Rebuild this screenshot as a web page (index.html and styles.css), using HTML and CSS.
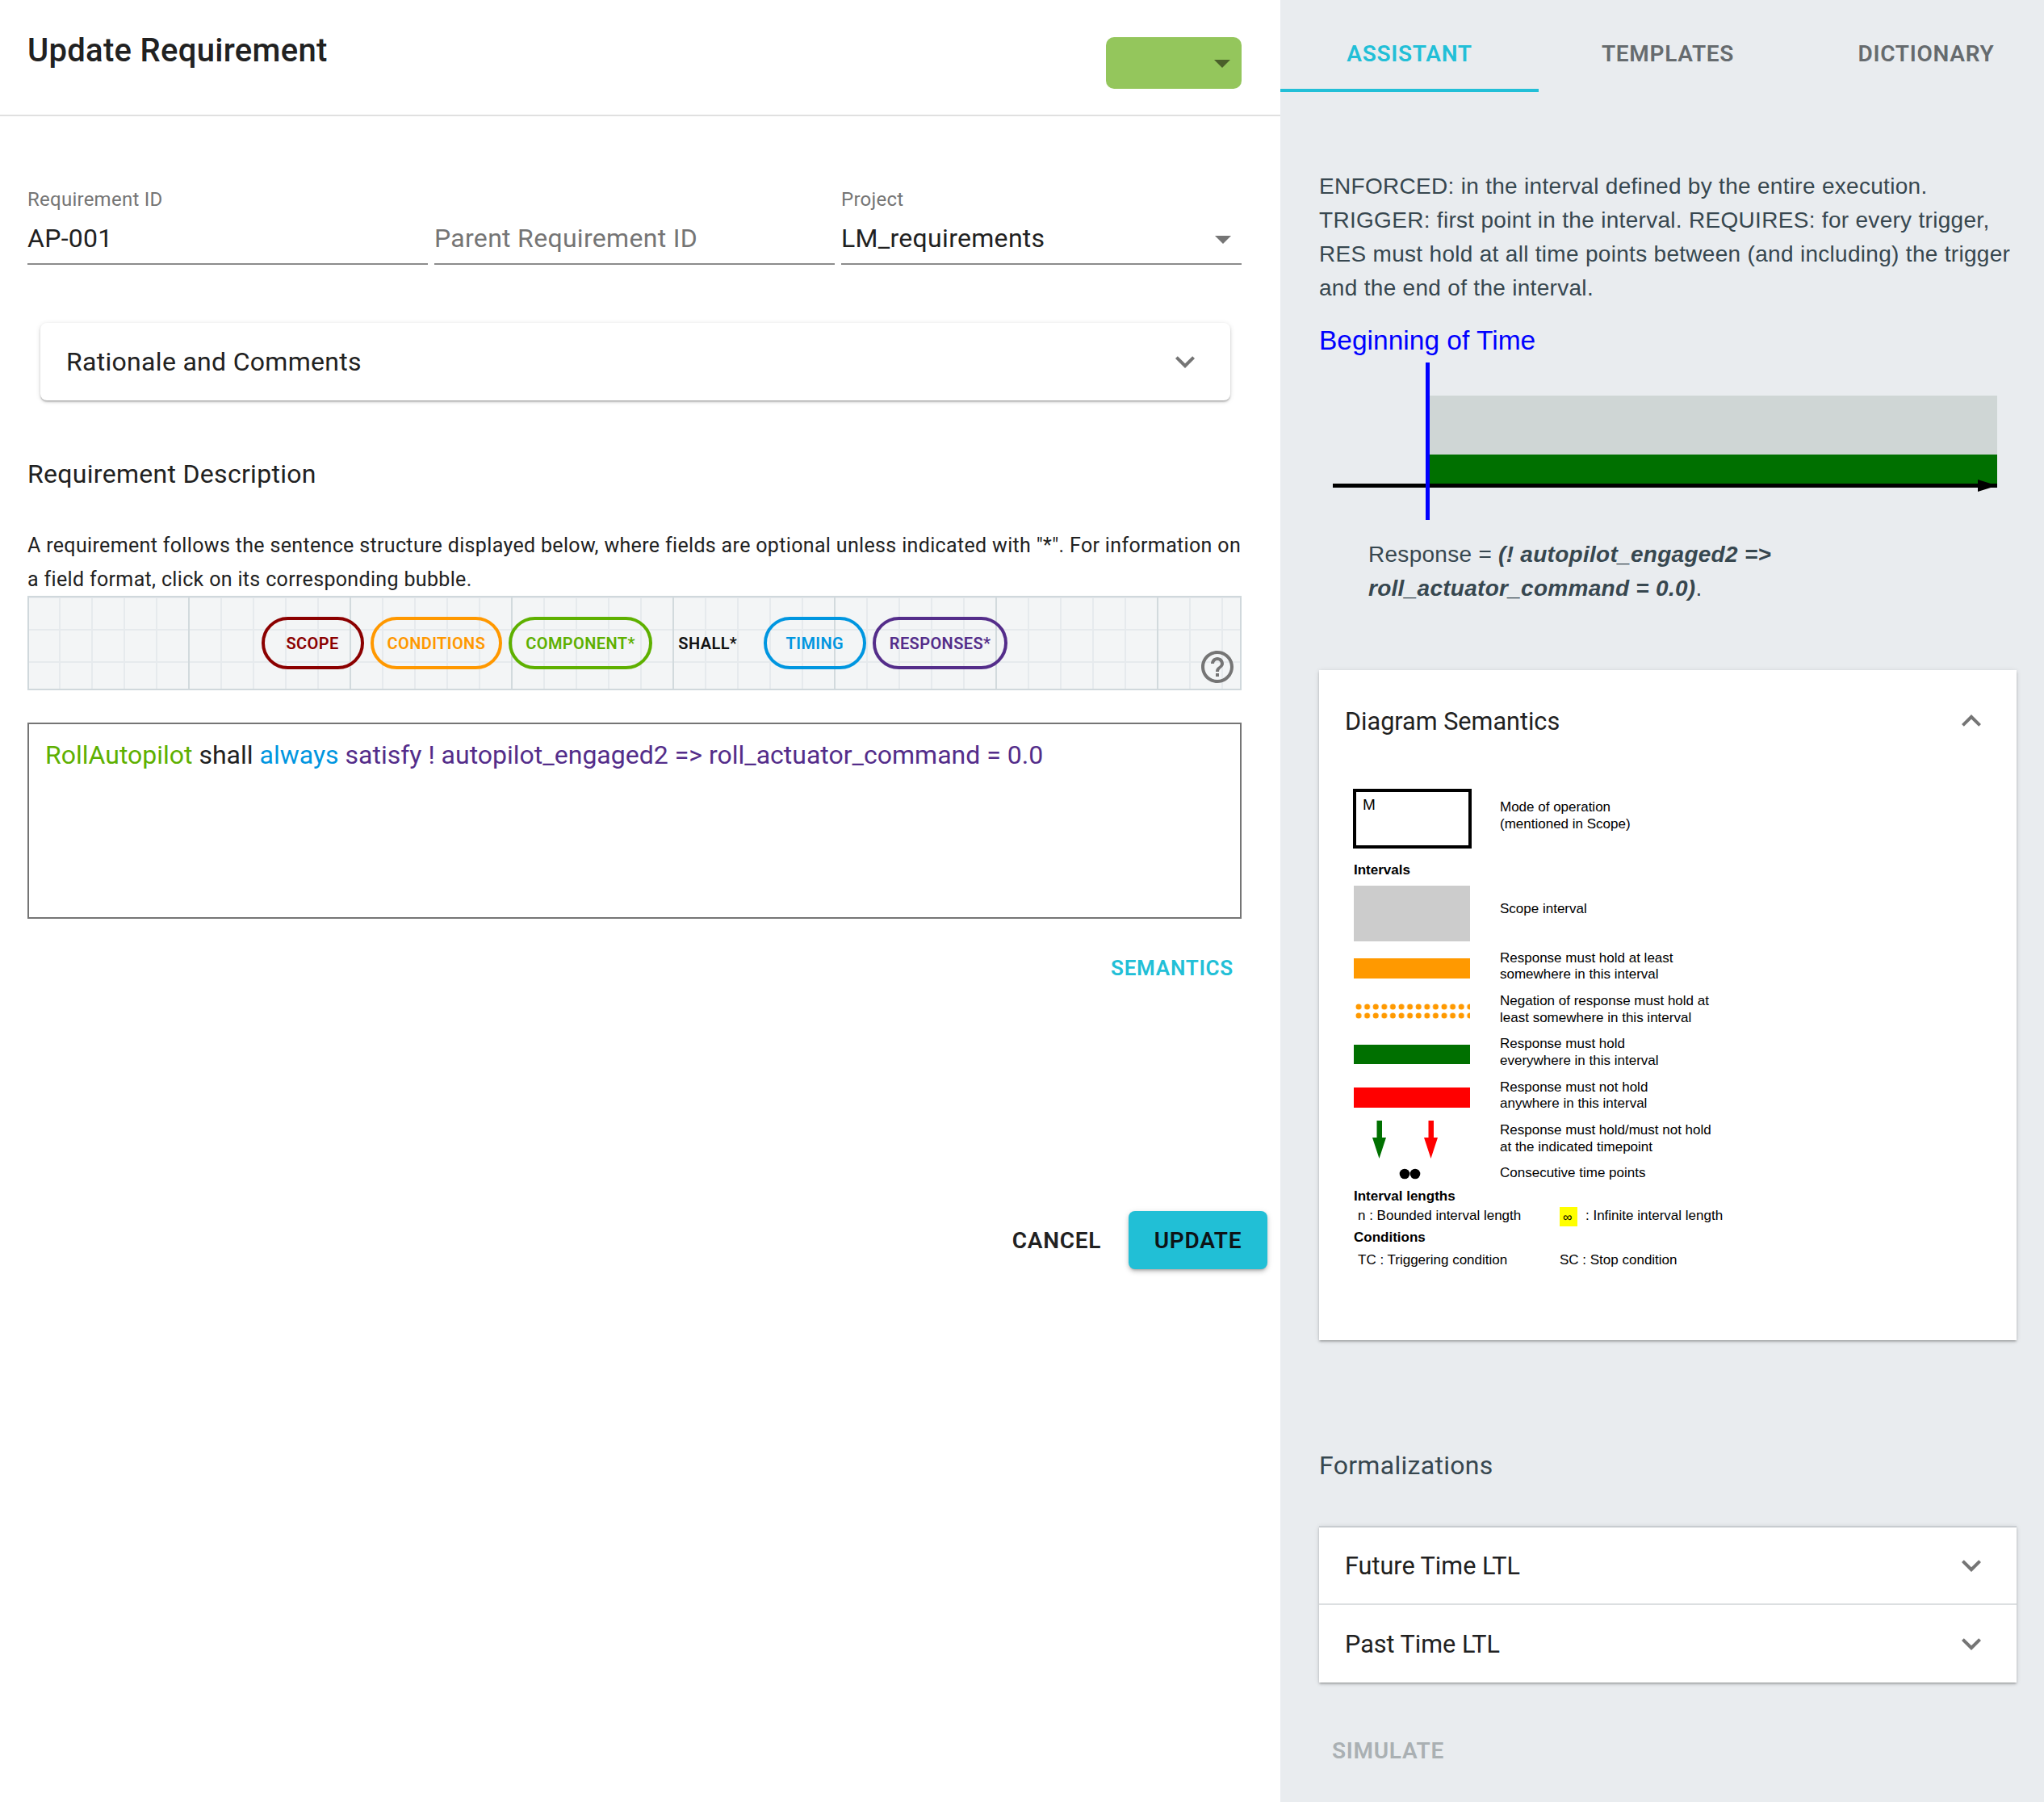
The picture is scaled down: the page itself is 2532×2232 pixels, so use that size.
FILE: index.html
```html
<!DOCTYPE html>
<html lang="en">
<head>
<meta charset="utf-8">
<title>Update Requirement</title>
<link rel="stylesheet" href="styles.css">
</head>
<body>
<div class="app">
  <main class="editor">
    <header class="editor-head">
      <h1 class="title">Update Requirement</h1>
      <div class="status"><span class="caret caret-status"></span></div>
    </header>
    <section class="fields">
      <div class="field">
        <label class="field-label">Requirement ID</label>
        <div class="field-value">AP-001</div>
      </div>
      <div class="field">
        <label class="field-label">&nbsp;</label>
        <div class="field-value placeholder">Parent Requirement ID</div>
      </div>
      <div class="field">
        <label class="field-label">Project</label>
        <div class="field-value select">LM_requirements<span class="caret"></span></div>
      </div>
    </section>
    <div class="rationale">
      <span>Rationale and Comments</span>
      <svg class="chev" viewBox="0 0 24 24"><path d="M16.59 8.59L12 13.17 7.41 8.59 6 10l6 6 6-6z"/></svg>
    </div>
    <h2 class="desc-title">Requirement Description</h2>
    <p class="desc">A requirement follows the sentence structure displayed below, where fields are optional unless indicated with "*". For information on a field format, click on its corresponding bubble.</p>
    <div class="bubbles">
      <span class="pill pill-scope">SCOPE</span>
      <span class="pill pill-cond">CONDITIONS</span>
      <span class="pill pill-comp">COMPONENT*</span>
      <span class="pill pill-shall">SHALL*</span>
      <span class="pill pill-time">TIMING</span>
      <span class="pill pill-resp">RESPONSES*</span>
      <svg class="help" viewBox="0 0 24 24"><path d="M11 18h2v-2h-2v2zm1-16C6.48 2 2 6.48 2 12s4.48 10 10 10 10-4.48 10-10S17.52 2 12 2zm0 18c-4.41 0-8-3.59-8-8s3.59-8 8-8 8 3.59 8 8-3.59 8-8 8zm0-14c-2.21 0-4 1.79-4 4h2c0-1.1.9-2 2-2s2 .9 2 2c0 2-3 1.75-3 5h2c0-2.25 3-2.5 3-5 0-2.21-1.79-4-4-4z"/></svg>
    </div>
    <div class="sentence"><span class="t-comp">RollAutopilot</span> shall <span class="t-time">always</span> <span class="t-resp">satisfy ! autopilot_engaged2 =&gt; roll_actuator_command = 0.0</span></div>
    <div class="semantics-row"><span class="semantics">SEMANTICS</span></div>
    <div class="actions">
      <span class="btn-cancel">CANCEL</span>
      <span class="btn-update">UPDATE</span>
    </div>
  </main>
  <aside class="side">
    <nav class="tabs">
      <span class="tab tab-active">ASSISTANT</span>
      <span class="tab">TEMPLATES</span>
      <span class="tab">DICTIONARY</span>
    </nav>
    <div class="side-body">
      <p class="explain">ENFORCED: in the interval defined by the entire execution. TRIGGER: first point in the interval. REQUIRES: for every trigger, RES must hold at all time points between (and including) the trigger and the end of the interval.</p>
      <div class="scope-name">Beginning of Time</div>
      <svg class="timeline" viewBox="0 0 864 198" width="864" height="198">
        <rect x="136" y="42" width="704" height="73" fill="#cfd6d5"/>
        <rect x="136" y="115" width="704" height="37" fill="#007000"/>
        <rect x="17" y="151" width="823" height="5" fill="#000"/>
        <polygon points="816,146 840,153.500 816,161" fill="#000"/>
        <rect x="132" y="1" width="5" height="195" fill="#0000ff"/>
      </svg>
      <p class="response">Response = <b><i>(! autopilot_engaged2 =&gt; roll_actuator_command = 0.0)</i></b>.</p>
      <section class="card">
        <div class="acc-head card-head">
          <span>Diagram Semantics</span>
          <svg class="chev" viewBox="0 0 24 24"><path d="M12 8l-6 6 1.41 1.41L12 10.83l4.590 4.580L18 14z"/></svg>
        </div>
        <svg class="legend" viewBox="0 0 864 684" width="864" height="684">
          <defs>
            <pattern id="dots" x="43" y="265" width="10.600" height="11" patternUnits="userSpaceOnUse"><circle cx="6" cy="6" r="3.500" fill="#ff9900"/></pattern>
          </defs>
          <rect x="44" y="3" width="143" height="70" fill="#fff" stroke="#000" stroke-width="4"/>
          <text class="lg lg-m" x="54" y="27">M</text>
          <text class="lg" x="224" y="29">Mode of operation</text>
          <text class="lg" x="224" y="50">(mentioned in Scope)</text>
          <text class="lg lg-b" x="43" y="107">Intervals</text>
          <rect x="43" y="121" width="144" height="69" fill="#ccc"/>
          <text class="lg" x="224" y="155">Scope interval</text>
          <rect x="43" y="211" width="144" height="25" fill="#ff9900"/>
          <text class="lg" x="224" y="216">Response must hold at least</text>
          <text class="lg" x="224" y="236">somewhere in this interval</text>
          <rect x="43" y="265" width="144" height="22" fill="url(#dots)"/>
          <text class="lg" x="224" y="269">Negation of response must hold at</text>
          <text class="lg" x="224" y="290">least somewhere in this interval</text>
          <rect x="43" y="318" width="144" height="24" fill="#007000"/>
          <text class="lg" x="224" y="322">Response must hold</text>
          <text class="lg" x="224" y="343">everywhere in this interval</text>
          <rect x="43" y="371" width="144" height="25" fill="#ff0000"/>
          <text class="lg" x="224" y="376">Response must not hold</text>
          <text class="lg" x="224" y="396">anywhere in this interval</text>
          <polygon points="71.500,412 78,412 78,433 83,433 74.500,459 66,433 71.500,433" fill="#007000"/>
          <polygon points="135.500,412 142,412 142,433 147,433 138.500,459 130,433 135.500,433" fill="#ff0000"/>
          <text class="lg" x="224" y="429">Response must hold/must not hold</text>
          <text class="lg" x="224" y="450">at the indicated timepoint</text>
          <circle cx="106" cy="478" r="6.300" fill="#000"/>
          <circle cx="119" cy="478" r="6.300" fill="#000"/>
          <text class="lg" x="224" y="482">Consecutive time points</text>
          <text class="lg lg-b" x="43" y="511">Interval lengths</text>
          <text class="lg" x="48" y="535">n : Bounded interval length</text>
          <rect x="298" y="519" width="22" height="24" fill="#ffff00"/>
          <text class="lg lg-inf" x="302" y="537">∞</text>
          <text class="lg" x="330" y="535">: Infinite interval length</text>
          <text class="lg lg-b" x="43" y="562">Conditions</text>
          <text class="lg" x="48" y="590">TC : Triggering condition</text>
          <text class="lg" x="298" y="590">SC : Stop condition</text>
        </svg>
      </section>
      <h3 class="form-title">Formalizations</h3>
      <section class="form-group">
        <div class="acc-head form-row">
          <span>Future Time LTL</span>
          <svg class="chev" viewBox="0 0 24 24"><path d="M16.59 8.59L12 13.17 7.41 8.59 6 10l6 6 6-6z"/></svg>
        </div>
        <div class="acc-head form-row form-row-last">
          <span>Past Time LTL</span>
          <svg class="chev" viewBox="0 0 24 24"><path d="M16.59 8.59L12 13.17 7.41 8.59 6 10l6 6 6-6z"/></svg>
        </div>
      </section>
      <div class="simulate">SIMULATE</div>
    </div>
  </aside>
</div>
</body>
</html>
```
FILE: styles.css
```css
* { box-sizing: border-box; }
html, body { margin: 0; padding: 0; }
body { font-family: Roboto, sans-serif; color: #212121; background: #fff; }
.app { display: flex; width: 2532px; height: 2232px; overflow: hidden; }
.editor { width: 1586px; flex: none; background: #fff; }
.side { flex: 1; background: #e9ecef; min-width: 0; }

.editor-head { height: 144px; border-bottom: 2px solid #e0e0e0; display: flex; justify-content: space-between; padding: 46px 48px 0 34px; }
.title { margin: 0; font-size: 40px; font-weight: 500; line-height: 34px; letter-spacing: .3px; }
.status { width: 168px; height: 64px; background: #94c65c; border-radius: 10px; position: relative; }
.caret { position: absolute; right: 14px; top: 28px; width: 0; height: 0; border-left: 10px solid transparent; border-right: 10px solid transparent; border-top: 10px solid #757575; }
.caret-status { border-top-color: #4a5f2a; }

.fields { display: grid; grid-template-columns: repeat(3, 496px); column-gap: 8px; padding: 88px 0 0 34px; }
.field-label { display: block; font-size: 24px; line-height: 30px; letter-spacing: .25px; color: #757575; }
.field-value { margin-top: 9px; height: 57px; padding-bottom: 7px; font-size: 32px; line-height: 48px; letter-spacing: .3px; border-bottom: 2px solid #8c8c8c; position: relative; }
.placeholder { color: #757575; }
.select .caret { right: 13px; top: 21px; }

.rationale { margin: 72px 62px 0 50px; height: 96px; padding: 0 32px; display: flex; align-items: center; justify-content: space-between; border-radius: 8px; font-size: 32px; letter-spacing: .3px; background: #fff; box-shadow: 0 2px 2px -1px rgba(0,0,0,.25), 0 2px 3px 0 rgba(0,0,0,.14), 0 1px 6px 0 rgba(0,0,0,.12); }
.chev { width: 48px; height: 48px; flex: none; fill: #757575; }
.desc-title { margin: 67px 0 0 34px; font-size: 32px; font-weight: 400; line-height: 48px; letter-spacing: .3px; }
.desc { margin: 44px 47px -1px 34px; font-size: 25px; line-height: 42px; letter-spacing: .34px; }

.bubbles { margin: 0 48px 0 34px; height: 117px; display: flex; align-items: center; justify-content: center; gap: 8px; position: relative; border: 2px solid #d0d8dc;
  background-color: #f3f5f6;
  background-image:
    linear-gradient(90deg, #d2dadd 2px, transparent 2px),
    linear-gradient(90deg, #e6eaed 2px, transparent 2px),
    linear-gradient(180deg, #e6eaed 2px, transparent 2px);
  background-size: 200px 100%, 40px 100%, 100% 40px;
  background-position: -3px 0, -3px 0, 0 -1px; }
.pill { min-width: 127px; height: 65px; padding: 0 17px; display: flex; align-items: center; justify-content: center; border: 4px solid; border-radius: 33px; font-size: 20px; font-weight: 600; letter-spacing: .4px; }
.pill-scope { color: #8b0000; }
.pill-cond { color: #ff9800; }
.pill-comp { color: #5eb000; }
.pill-shall { min-width: 122px; color: #111; border-color: transparent; }
.pill-time { color: #0096e0; }
.pill-resp { color: #542d8a; }
.help { position: absolute; right: 4px; bottom: 3px; width: 48px; height: 48px; fill: #757575; }

.sentence { margin: 40px 48px 0 34px; height: 243px; padding: 14px 20px; border: 2px solid #757575; font-size: 32px; line-height: 48px; }
.t-comp { color: #5eb000; }
.t-time { color: #0096e0; }
.t-resp { color: #542d8a; }
.semantics-row { margin: 41px 58px 0 0; display: flex; justify-content: flex-end; }
.semantics { font-size: 26px; font-weight: 600; line-height: 40px; letter-spacing: .75px; color: #22bfd7; }
.actions { margin-top: 281px; padding-right: 16px; display: flex; justify-content: flex-end; align-items: center; gap: 34px; }
.btn-cancel { font-size: 28px; font-weight: 600; letter-spacing: .7px; color: #212121; }
.btn-update { width: 172px; height: 72px; display: flex; align-items: center; justify-content: center; border-radius: 8px; background: #21bfd6; font-size: 28px; font-weight: 600; letter-spacing: .7px; color: #0d1316; box-shadow: 0 3px 3px -2px rgba(0,0,0,.2), 0 3px 5px 0 rgba(0,0,0,.14), 0 2px 8px 0 rgba(0,0,0,.12); }

.tabs { display: flex; height: 114px; overflow: hidden; }
.tab { flex: none; width: 320px; padding-top: 22px; display: flex; align-items: center; justify-content: center; font-size: 28px; font-weight: 600; letter-spacing: .7px; color: #666b6e; border-bottom: 4px solid transparent; }
.tab-active { color: #22bfd7; border-bottom-color: #22bfd7; }
.side-body { padding: 0 34px 0 48px; }
.explain { margin: 96px 0 0; font-family: "Liberation Sans", Arial, sans-serif; font-size: 28px; letter-spacing: .3px; line-height: 42px; color: #37474f; }
.scope-name { margin-top: 20px; font-family: "Liberation Sans", Arial, sans-serif; font-size: 33.500px; line-height: 48px; color: #0000ff; }
.timeline { display: block; margin-top: 2px; }
.response { margin: 20px 0 0; padding-left: 61px; max-width: 760px; font-family: "Liberation Sans", Arial, sans-serif; font-size: 28px; letter-spacing: .28px; line-height: 42px; color: #37474f; }
.card { margin-top: 80px; height: 830px; background: #fff; box-shadow: 0 2px 2px -1px rgba(0,0,0,.2), 0 2px 3px 0 rgba(0,0,0,.14), 0 1px 6px 0 rgba(0,0,0,.12); }
.acc-head { display: flex; align-items: center; justify-content: space-between; padding: 0 32px; font-size: 30.600px; background: #fff; }
.card-head { height: 146px; padding-bottom: 20px; }
.legend { display: block; }
.lg { font-family: "Liberation Sans", Arial, sans-serif; font-size: 17px; fill: #000; }
.lg-m { font-size: 19px; }
.lg-b { font-weight: 700; }
.lg-inf { font-size: 16px; }
.form-title { margin: 131px 0 0; font-size: 32px; font-weight: 400; line-height: 48px; letter-spacing: .3px; color: #37474f; }
.form-group { margin-top: 51px; border-top: 2px solid #c8ccd0; background: #fff; box-shadow: 0 2px 2px -1px rgba(0,0,0,.2), 0 2px 3px 0 rgba(0,0,0,.14), 0 1px 6px 0 rgba(0,0,0,.12); }
.form-row { height: 96px; border-bottom: 2px solid #dcdfe1; }
.form-row-last { border-bottom: 0; }
.simulate { margin-top: 65px; padding-left: 16px; font-size: 28px; font-weight: 600; line-height: 40px; letter-spacing: .7px; color: #aab0b3; }
```
